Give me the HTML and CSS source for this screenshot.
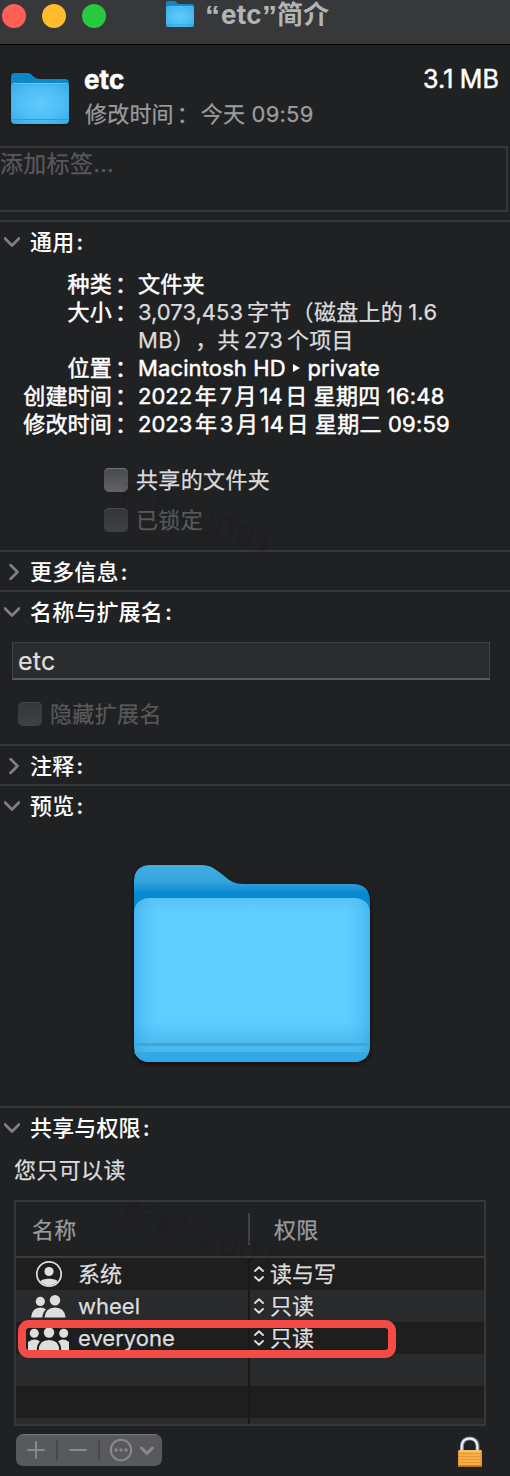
FILE: index.html
```html
<!DOCTYPE html>
<html lang="zh-CN">
<head>
<meta charset="utf-8">
<title>“etc”简介</title>
<link rel="stylesheet" href="styles.css">
</head>
<body>
<svg class="defs" width="0" height="0" aria-hidden="true">
  <defs>
    <linearGradient id="back" x1="0" y1="0" x2="0" y2="1"><stop offset="0" stop-color="#42ade5"/><stop offset=".09" stop-color="#35a5df"/><stop offset=".16" stop-color="#0788cf"/><stop offset="1" stop-color="#0788cf"/></linearGradient>
    <linearGradient id="front" x1="0" y1="0" x2="0" y2="1"><stop offset="0" stop-color="#57c4f8"/><stop offset=".08" stop-color="#5ecdff"/><stop offset=".75" stop-color="#5ecdff"/><stop offset=".86" stop-color="#50bef3"/><stop offset="1" stop-color="#45b4eb"/></linearGradient>
    <linearGradient id="edge" x1="0" y1="0" x2="1" y2="0"><stop offset="0" stop-color="#2ba0dd" stop-opacity=".5"/><stop offset=".1" stop-color="#4bbcf3" stop-opacity="0"/><stop offset=".9" stop-color="#4bbcf3" stop-opacity="0"/><stop offset="1" stop-color="#2ba0dd" stop-opacity=".5"/></linearGradient>
    <linearGradient id="foot" x1="0" y1="0" x2="0" y2="1"><stop offset="0" stop-color="#35a9e3"/><stop offset="1" stop-color="#2da7e4"/></linearGradient>
    <radialGradient id="face" cx=".5" cy=".5" r=".7"><stop offset="0" stop-color="#5fcbfd"/><stop offset=".5" stop-color="#50bff5"/><stop offset="1" stop-color="#36aae6"/></radialGradient>
    <symbol id="folder" viewBox="0 0 236 197">
      <path fill="url(#back)" d="M0 17Q0 0 17 0H67C77 0 81 4 89 10C96 16 100 19 110 19H219Q236 19 236 37V178H0Z"/>
      <path fill="url(#front)" d="M0 50Q0 33 17 33H219Q236 33 236 50V180Q236 197 219 197H17Q0 197 0 180Z"/>
      <path fill="url(#edge)" d="M0 50Q0 33 17 33H219Q236 33 236 50V180Q236 197 219 197H17Q0 197 0 180Z"/>
      <path fill="#39a6de" d="M0 178H236V181H0Z"/>
      <path fill="url(#foot)" d="M0 187H235Q231 197 219 197H17Q4 197 0 187Z"/>
    </symbol>
    <symbol id="folder-small" viewBox="0 0 58 51" preserveAspectRatio="none">
      <path fill="#0f86c8" d="M0 4Q0 0 4 0H16C19 0 20 1 22 3C24 5 26 6 29 6H54Q58 6 58 10V40H0Z"/>
      <path fill="url(#face)" d="M0 13Q0 10 3 10H55Q58 10 58 13V47Q58 51 54 51H4Q0 51 0 47Z"/>
      <path d="M2 10.400H56" stroke="#6fcdf6" stroke-width=".8"/>
      <path d="M0 46.500H58" stroke="#2e9fd9" stroke-width="1"/>
    </symbol>
    <symbol id="down" viewBox="0 0 16 10"><path d="M1 1.500L8 8.500L15 1.500" fill="none" stroke="currentColor" stroke-width="2.600" stroke-linecap="round" stroke-linejoin="round"/></symbol>
    <symbol id="right" viewBox="0 0 10 16"><path d="M1.500 1L8.500 8L1.500 15" fill="none" stroke="currentColor" stroke-width="2.600" stroke-linecap="round" stroke-linejoin="round"/></symbol>
    <symbol id="updown" viewBox="0 0 10 16"><path d="M1 5L5 1.300L9 5M1 11L5 14.700L9 11" fill="none" stroke="currentColor" stroke-width="1.900" stroke-linecap="round" stroke-linejoin="round"/></symbol>
  </defs>
</svg>
<div class="window">
  <header class="titlebar">
    <i class="light close"></i><i class="light mini"></i><i class="light max"></i>
    <svg class="title-folder"><use href="#folder-small"/></svg>
    <h1 class="title"><span class="quote">“</span><span class="title-latin">etc</span><span class="quote">”</span>简介</h1>
  </header>

  <div class="summary">
    <svg class="summary-folder"><use href="#folder-small"/></svg>
    <div class="summary-text">
      <div class="summary-top"><strong>etc</strong><span class="size">3.1<i class="thin"></i>MB</span></div>
      <div class="modified">修改时间<span class="colon">：</span>今天&nbsp;09:59</div>
    </div>
  </div>
  <div class="tags">添加标签...</div>

  <section class="section general">
    <h2 class="head"><svg class="down"><use href="#down"/></svg>通用<b>:</b></h2>
    <dl class="facts">
      <dt>种类<span class="colon">：</span></dt><dd>文件夹</dd>
      <dt>大小<span class="colon">：</span></dt><dd class="dim"><span class="n first">3,073,453</span>字节（磁盘上的<span class="n last">1.6</span><br>MB），共<span class="n">273</span>个项目</dd>
      <dt>位置<span class="colon">：</span></dt><dd class="latin">Macintosh HD <svg class="tri" viewBox="0 0 7 8"><path d="M0 0L7 4L0 8Z" fill="currentColor"/></svg> private</dd>
      <dt>创建时间<span class="colon">：</span></dt><dd><span class="n first">2022</span>年<span class="n">7</span>月<span class="n">14</span>日 星期四 16:48</dd>
      <dt>修改时间<span class="colon">：</span></dt><dd><span class="n first">2023</span>年<span class="n">3</span>月<span class="n">14</span>日 星期二 09:59</dd>
    </dl>
    <div class="checks">
      <label class="check"><i class="box"></i>共享的文件夹</label>
      <label class="check off"><i class="box"></i>已锁定</label>
    </div>
    <span class="watermark mark-a">彭鹤 2001</span>
  </section>

  <section class="section more"><h2 class="head"><svg class="right"><use href="#right"/></svg>更多信息<b>:</b></h2></section>

  <section class="section name">
    <h2 class="head"><svg class="down"><use href="#down"/></svg>名称与扩展名<b>:</b></h2>
    <div class="field">etc</div>
    <label class="check off hide-ext"><i class="box"></i>隐藏扩展名</label>
  </section>

  <section class="section notes"><h2 class="head"><svg class="right"><use href="#right"/></svg>注释<b>:</b></h2></section>

  <section class="section preview">
    <h2 class="head"><svg class="down"><use href="#down"/></svg>预览<b>:</b></h2>
    <svg class="preview-folder"><use href="#folder"/></svg>
  </section>

  <section class="section sharing">
    <h2 class="head"><svg class="down"><use href="#down"/></svg>共享与权限<b>:</b></h2>
    <p class="note">您只可以读</p>
    <div class="table">
      <div class="thead"><span class="c1">名称</span><span class="c2">权限</span></div>
      <div class="row">
        <span class="who"><svg width="42" height="28" viewBox="0 0 42 28"><circle cx="21" cy="14" r="12.200" fill="none" stroke="#dedede" stroke-width="1.700"/><circle cx="21" cy="11.500" r="4.600" fill="#dedede"/><path fill="#dedede" d="M12.300 21.500C14 17.800 28 17.800 29.700 21.500Q26 25.300 21 25.300T12.300 21.500Z"/></svg>系统</span>
        <span class="perm"><svg class="updown"><use href="#updown"/></svg>读与写</span>
      </div>
      <div class="row">
        <span class="who"><svg width="42" height="28" viewBox="0 0 42 28"><g fill="#dedede"><circle cx="12.300" cy="9.400" r="4.600"/><path d="M3 25.500Q4 15.500 12.500 15.500Q16 15.500 18 17.500Q14.800 20 14.300 25.500Z"/><circle cx="27" cy="8.200" r="5.200"/><path d="M16.500 25.500Q17.500 15.500 27 15.500T37.700 25.500Z"/></g></svg>wheel</span>
        <span class="perm"><svg class="updown"><use href="#updown"/></svg>只读</span>
      </div>
      <div class="row">
        <span class="who"><svg width="42" height="28" viewBox="0 0 42 28"><g fill="#dedede"><circle cx="6.300" cy="9.300" r="4.500"/><circle cx="35.700" cy="9.300" r="4.500"/><circle cx="21" cy="8.500" r="5.200"/><path d="M0 26V18Q7 13.500 12 17.500Q8.800 20 8.800 26ZM41 26V18Q35 13.500 30 17.500Q33.200 20 33.200 26ZM10.800 26Q11 16 21 16T31.200 26Z"/></g></svg>everyone</span>
        <span class="perm"><svg class="updown"><use href="#updown"/></svg>只读</span>
      </div>
      <div class="row"><span class="who"></span></div>
      <div class="row"><span class="who"></span></div>
      <div class="row stub"><span class="who"></span></div>
      <span class="highlight"></span>
      <span class="watermark mark-b">彭鹤 2001</span>
    </div>
    <footer class="bottom">
      <svg class="tools" width="146" height="32" viewBox="0 0 146 32"><rect width="146" height="32" rx="7" fill="#58595b"/><path d="M6 .6H140" stroke="#737476" stroke-width="1.200"/><path d="M41 6V26M83 6V26" stroke="#47484a" stroke-width="2"/><g fill="none" stroke="#88898b" stroke-width="2" stroke-linecap="round"><path d="M12 16H28M20 8V24M54 16H70"/><circle cx="105" cy="16" r="10.200"/><path d="M125.500 14L131 19.500L136.500 14" stroke-width="3" stroke-linejoin="round"/></g><g fill="#88898b"><circle cx="100" cy="16" r="1.700"/><circle cx="105" cy="16" r="1.700"/><circle cx="110" cy="16" r="1.700"/></g></svg>
      <svg class="lock" width="26" height="32" viewBox="0 0 26 32"><path d="M5 15V10C5 0 20.500 0 20.500 10V15" fill="none" stroke="#778292" stroke-width="4"/><path d="M4.700 15V10C4.700 0 20.300 0 20.300 10V15" fill="none" stroke="#eef3fa" stroke-width="2"/><rect x="1" y="14" width="24" height="17" rx="1" fill="#e99632"/><rect x="2" y="14.500" width="21.500" height="15" fill="#f9ae48"/><path d="M2 17.500H24M2 20.500H24M2 23.500H24M2 26.500H24" stroke="#e39a3d"/><path d="M1 30.200H25" stroke="#b9651c" stroke-width="1.500"/><path d="M2 15H24" stroke="#ffd384"/></svg>
    </footer>
  </section>
</div>
</body>
</html>
```
FILE: styles.css
```css
* { box-sizing: border-box; }
body { margin: 0; background: #202123; color: #fff; font: 400 22px/28px Inter, "Noto Sans CJK SC", sans-serif; letter-spacing: .2px; text-spacing-trim: space-all; -webkit-text-stroke: .25px currentColor; }
h1, h2, p, dl, dd { margin: 0; font-weight: 500; }
svg { display: block; flex: none; }
.defs { position: absolute; }
.window { width: 510px; height: 1476px; overflow: hidden; background: #202123; white-space: nowrap; }

.titlebar { display: flex; height: 45px; padding: 4px 0 0 2px; background: #373839; border-bottom: 1px solid #000; }
.light { flex: none; width: 24px; height: 24px; margin-right: 16px; border-radius: 50%; }
.close { background: #ff5f57; }
.mini { background: #febc2e; }
.max { background: #28c840; }
.title-folder { width: 28px; height: 26px; margin: -3px 11px 0 44px; }
.title { display: flex; margin-top: -3px; color: #b3b4b5; font-size: 26px; font-weight: 700; line-height: 28px; letter-spacing: 0; -webkit-text-stroke: 0; }
.quote { width: 15px; font-family: "Liberation Sans", sans-serif; font-size: 30px; line-height: 30px; }
.title-latin { width: 41px; margin-left: 1px; letter-spacing: .3px; }

.summary { display: flex; height: 101px; padding: 19px 11px 0; }
.summary-folder { width: 58px; height: 51px; margin-top: 9px; filter: drop-shadow(0 1px 1px #0008); }
.summary-text { flex: 1; padding-left: 15px; }
.summary-top { display: flex; justify-content: space-between; height: 32px; font-size: 26px; line-height: 31px; }
.summary-top strong { letter-spacing: .1px; -webkit-text-stroke: .5px currentColor; }
.size { font-size: 25px; letter-spacing: .2px; -webkit-text-stroke: .5px currentColor; }
.thin { display: inline-block; width: 6px; }
.modified { margin-top: 4px; padding-left: 1px; color: #9b9c9d; letter-spacing: .2px; }
.colon { display: inline-block; width: 22px; padding-left: 3px; letter-spacing: 0; }
.modified .colon { width: 27px; }
.tags { height: 66px; margin: 0 2px 8px -2px; border: 2px solid #37383a; color: #58595b; font-size: 23px; line-height: 32px; letter-spacing: .3px; }

.section { border-top: 2px solid #37383a; }
.head { display: flex; align-items: center; height: 38px; padding: 2px 0 0 4px; font-size: 22px; line-height: 36px; letter-spacing: .15px; -webkit-text-stroke: 0; }
.head b { margin-left: 2px; font-weight: 600; }
.head .down { width: 16px; height: 10px; margin-right: 10px; color: #808183; }
.head .right { width: 10px; height: 16px; margin: 0 11px 0 5px; color: #808183; }
.general { position: relative; height: 330px; }
.facts { display: grid; grid-template-columns: 134px 1fr; column-gap: 4px; padding-top: 10px; -webkit-text-stroke: .5px currentColor; }
.facts dt { text-align: right; font-weight: 400; }
.facts dd { font-weight: 400; }
.facts .latin { letter-spacing: .12px; }
.facts .dim { color: #dcdcdd; letter-spacing: .3px; -webkit-text-stroke: .25px currentColor; }
.n { margin: 0 2.6px; letter-spacing: 0; }
.dim .n { margin: 0 4px; }
.facts .n.first { margin-left: 0; }
.dim .n.last { margin: 0 0 0 5px; letter-spacing: .3px; }
.tri { display: inline-block; width: 7px; height: 8px; margin: 0 1px; vertical-align: 4px; }
.checks { display: grid; gap: 12px; margin: 28px 0 0 104px; }
.check { display: flex; align-items: center; gap: 8px; height: 28px; color: #dcdcdd; letter-spacing: .35px; }
.box { width: 24px; height: 24px; border-radius: 5px; background: linear-gradient(#48494b, #626365); box-shadow: inset 0 1px #727375; }
.off { color: #58595b; }
.off .box { background: linear-gradient(#353638, #404143); box-shadow: inset 0 1px #48494b; }
.more, .notes { height: 40px; }
.name { height: 154px; }
.field { width: 478px; height: 38px; margin: 12px 0 20px 12px; padding-left: 5px; background: #2b2c2e; border: 1px solid #414244; border-bottom: 2px solid #5a5b5d; color: #dedede; font-size: 25px; line-height: 36px; }
.hide-ext { margin-left: 18px; }
.preview { height: 322px; }
.preview-folder { width: 236px; height: 197px; margin: 41px 0 0 134px; overflow: visible; filter: drop-shadow(0 2px 2px #000a); }

.note { height: 28px; margin: 10px 0 16px 14px; color: #dcdcdd; font-weight: 400; letter-spacing: .35px; }
.table { position: relative; width: 472px; height: 226px; margin-left: 14px; border: 2px solid #37383a; background: #1e1e1e; }
.thead { display: grid; grid-template-columns: 232px 1fr; align-items: center; height: 56px; background: #202123; border-bottom: 2px solid #3b3c3e; color: #9b9c9d; }
.c1 { padding: 1px 0 0 16px; }
.c2 { height: 32px; padding-left: 24px; border-left: 2px solid #414244; line-height: 34px; }
.row { display: grid; grid-template-columns: 234px 1fr; height: 32px; line-height: 32px; color: #dedede; letter-spacing: 0; }
.row:nth-child(odd) { background: #292a2b; }
.who { display: flex; gap: 8px; padding-left: 12px; border-right: 2px solid #19191a; }
.who svg { margin-top: 2px; }
.perm { display: flex; align-items: center; gap: 6px; padding-left: 4px; }
.updown { width: 10px; height: 16px; }
.stub { height: 6px; }
.highlight { position: absolute; left: 2px; top: 118px; width: 378px; height: 38px; border: 8px solid #f44b46; border-radius: 11px; }
.watermark { position: absolute; color: #000; opacity: .08; font: 400 32px/40px "Liberation Sans", "Noto Sans CJK SC", sans-serif; letter-spacing: 3px; transform: rotate(18deg); -webkit-text-stroke: 0; }
.mark-a { left: 115px; top: 278px; }
.mark-b { left: 103px; top: 14px; }
.bottom { display: flex; justify-content: space-between; padding: 8px 27px 0 16px; }
.lock { margin-top: 2px; }
```
